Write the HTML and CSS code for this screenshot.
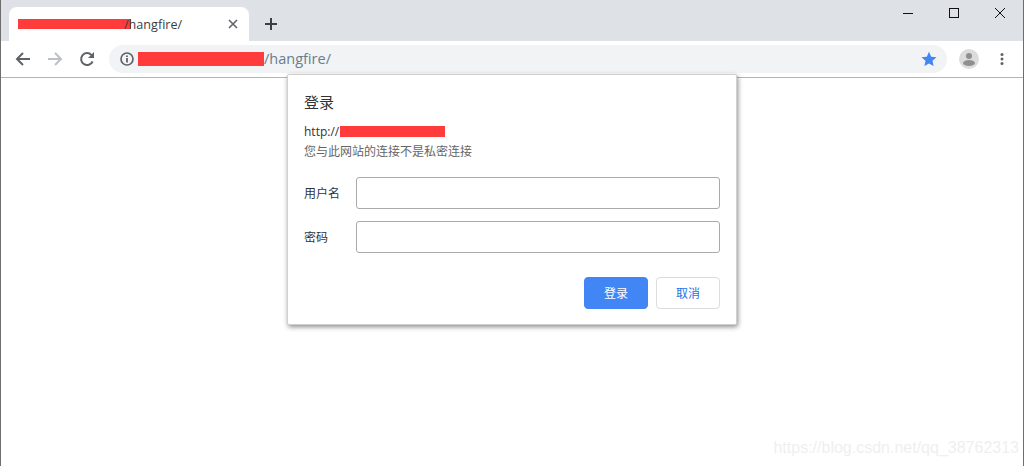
FILE: index.html
```html
<!DOCTYPE html>
<html lang="zh-CN">
<head>
    <meta charset="UTF-8">
    <meta name="viewport" content="width=device-width, initial-scale=1.0">
    <title>hangfire</title>
    <link rel="stylesheet" href="styles.css">
</head>
<body>
    <div class="window">
        <!-- Tab strip -->
        <div class="tabstrip">
            <div class="tab">
                <span class="tab-title"><span class="redact redact-tab"></span><span class="tab-path">/hangfire/</span></span>
                <svg class="tab-close" width="10" height="10" viewBox="0 0 10 10"><path d="M1 1l8 8M9 1l-8 8" stroke="#5f6368" stroke-width="1.6" fill="none"/></svg>
            </div>
            <svg class="new-tab" width="12" height="12" viewBox="0 0 12 12"><path d="M6 0v12M0 6h12" stroke="#3c4043" stroke-width="2" fill="none"/></svg>
            <div class="window-controls">
                <svg width="46" height="26" viewBox="0 0 46 26"><path d="M18 13.5h10" stroke="#111" fill="none"/></svg>
                <svg width="46" height="26" viewBox="0 0 46 26"><rect x="18.5" y="8.5" width="9" height="9" stroke="#111" fill="none"/></svg>
                <svg width="46" height="26" viewBox="0 0 46 26"><path d="M18 8l10 10M28 8l-10 10" stroke="#111" fill="none"/></svg>
            </div>
        </div>

        <!-- Toolbar -->
        <div class="toolbar">
            <svg class="nav-icon" width="16" height="16" viewBox="0 0 16 16"><path d="M15 8H2M8 2L2 8l6 6" stroke="#5f6368" stroke-width="2" fill="none"/></svg>
            <svg class="nav-icon" width="16" height="16" viewBox="0 0 16 16"><path d="M1 8h13M8 2l6 6-6 6" stroke="#bdc1c6" stroke-width="2" fill="none"/></svg>
            <svg class="nav-icon" width="16" height="16" viewBox="0 0 16 16"><path d="M13.6 10.500A6 6 0 1 1 12.400 3.900L14 5.400" stroke="#5f6368" stroke-width="2" fill="none"/><path d="M15 1v6H9z" fill="#5f6368"/></svg>
            <div class="omnibox">
                <svg class="info-icon" width="14" height="14" viewBox="0 0 14 14"><circle cx="7" cy="7" r="6" stroke="#5f6368" stroke-width="1.7" fill="none"/><path d="M7 6v4.500M7 3.400v1.600" stroke="#5f6368" stroke-width="1.800" fill="none"/></svg>
                <span class="redact redact-url"></span>
                <span class="url-path">/hangfire/</span>
                <svg class="star-icon" width="16" height="16" viewBox="0 0 16 16"><path d="M8 .8l2.200 4.900 5.300.6-4 3.500 1.100 5.300L8 12.400l-4.600 2.700 1.100-5.300-4-3.500 5.300-.6z" fill="#4285f4"/></svg>
            </div>
            <svg class="avatar" width="20" height="20" viewBox="0 0 20 20"><circle cx="10" cy="10" r="10" fill="#dcdcdc"/><circle cx="10" cy="7" r="3" fill="#8f8f8f"/><ellipse cx="10" cy="14" rx="6" ry="3" fill="#8f8f8f"/></svg>
            <svg class="menu-icon" width="4" height="14" viewBox="0 0 4 14"><circle cx="2" cy="2.500" r="1.500" fill="#5f6368"/><circle cx="2" cy="7" r="1.500" fill="#5f6368"/><circle cx="2" cy="11.500" r="1.500" fill="#5f6368"/></svg>
        </div>

        <!-- Page area -->
        <div class="page">
            <div class="watermark">https://blog.csdn.net/qq_38762313</div>
        </div>

        <!-- Login dialog -->
        <div class="dialog">
            <h2 class="dialog-title">登录</h2>
            <p class="dialog-origin">http://<span class="redact redact-origin"></span></p>
            <p class="dialog-note">您与此网站的连接不是私密连接</p>
            <div class="form-row">
                <label class="form-label">用户名</label>
                <input class="form-input" type="text">
            </div>
            <div class="form-row">
                <label class="form-label">密码</label>
                <input class="form-input" type="password">
            </div>
            <div class="dialog-buttons">
                <button class="btn btn-primary">登录</button>
                <button class="btn btn-cancel">取消</button>
            </div>
        </div>
    </div>
</body>
</html>
```

FILE: styles.css
```css
body {
    margin: 0;
    padding: 0;
    background-color: #fff;
    font-family: "Open Sans", "Noto Sans CJK SC", sans-serif;
    overflow: hidden;
}
.window {
    position: relative;
    box-sizing: border-box;
    width: 1024px;
    height: 466px;
    border-left: 1px solid #6e6e6e;
    border-right: 1px solid #6e6e6e;
    display: flex;
    flex-direction: column;
}
.redact {
    display: inline-block;
    background-color: #ff3b3b;
}

/* Tab strip */
.tabstrip {
    height: 41px;
    flex: none;
    background-color: #dee1e6;
    display: flex;
    align-items: flex-end;
}
.tab {
    box-sizing: border-box;
    width: 240px;
    height: 34px;
    margin-left: 8px;
    padding: 0 11px 0 9px;
    background-color: #fff;
    border-radius: 8px 8px 0 0;
    display: flex;
    align-items: center;
    justify-content: space-between;
}
.tab-title {
    display: flex;
    align-items: center;
    font-size: 12.6px;
    color: #3c4043;
}
.redact-tab {
    width: 113px;
    height: 10px;
    margin-top: -1px;
}
.tab-path {
    margin-left: -7px;
}
.new-tab {
    margin: 0 0 11px 16px;
}
.window-controls {
    margin-left: auto;
    align-self: flex-start;
    display: flex;
}

/* Toolbar */
.toolbar {
    box-sizing: border-box;
    height: 37px;
    flex: none;
    padding: 0 18px 1px 14px;
    background-color: #fff;
    border-bottom: 1px solid #b4b4b4;
    display: flex;
    align-items: center;
}
.nav-icon {
    margin-right: 16px;
}
.omnibox {
    box-sizing: border-box;
    width: 838px;
    height: 28px;
    margin-left: -2px;
    padding: 0 10px 0 11px;
    background-color: #f1f3f4;
    border-radius: 14px;
    display: flex;
    align-items: center;
}
.redact-url {
    width: 126px;
    height: 14px;
    margin-left: 4px;
}
.url-path {
    font-size: 14.5px;
    color: #6a7c8f;
}
.star-icon {
    margin-left: auto;
}
.avatar {
    margin-left: 12px;
}
.menu-icon {
    margin-left: 21px;
}

.page {
    flex: 1;
    position: relative;
    background-color: #fff;
}
.watermark {
    position: absolute;
    right: 4px;
    bottom: 9px;
    font-family: "Liberation Sans", sans-serif;
    font-size: 16px;
    color: #efefef;
}

/* Login dialog */
.dialog {
    position: absolute;
    top: 74px;
    left: 286px;
    box-sizing: border-box;
    width: 450px;
    height: 251px;
    padding: 18px 16px 16px;
    background-color: #fff;
    border: 1px solid #d0d0d0;
    border-radius: 2px;
    box-shadow: 1px 2px 5px rgba(0, 0, 0, 0.45);
}
.dialog-title {
    margin: 0;
    font-size: 15px;
    font-weight: normal;
    line-height: 18px;
    color: #333;
}
.dialog-origin {
    margin: 12px 0 0;
    display: flex;
    align-items: center;
    font-size: 12px;
    line-height: 17px;
    color: #333;
}
.redact-origin {
    width: 105px;
    height: 11px;
    margin-left: 1px;
}
.dialog-note {
    margin: 3px 0 0;
    font-size: 12px;
    line-height: 17px;
    color: #666;
}
.form-row {
    display: flex;
    align-items: center;
    margin-top: 12px;
}
.dialog-note + .form-row {
    margin-top: 17px;
}
.form-label {
    width: 52px;
    font-size: 12px;
    color: #333;
}
.form-input {
    box-sizing: border-box;
    width: 364px;
    height: 32px;
    padding: 0 8px;
    background-color: #fff;
    border: 1px solid #aaa;
    border-radius: 3px;
}
.dialog-buttons {
    margin-top: 24px;
    display: flex;
    justify-content: flex-end;
    gap: 8px;
}
.btn {
    box-sizing: border-box;
    width: 64px;
    height: 32px;
    padding: 0;
    border-radius: 4px;
    font-family: inherit;
    font-size: 12px;
}
.btn-primary {
    background-color: #4285f4;
    border: 1px solid #4285f4;
    color: #fff;
}
.btn-cancel {
    background-color: #fff;
    border: 1px solid #dadce0;
    color: #1a73e8;
}
```
